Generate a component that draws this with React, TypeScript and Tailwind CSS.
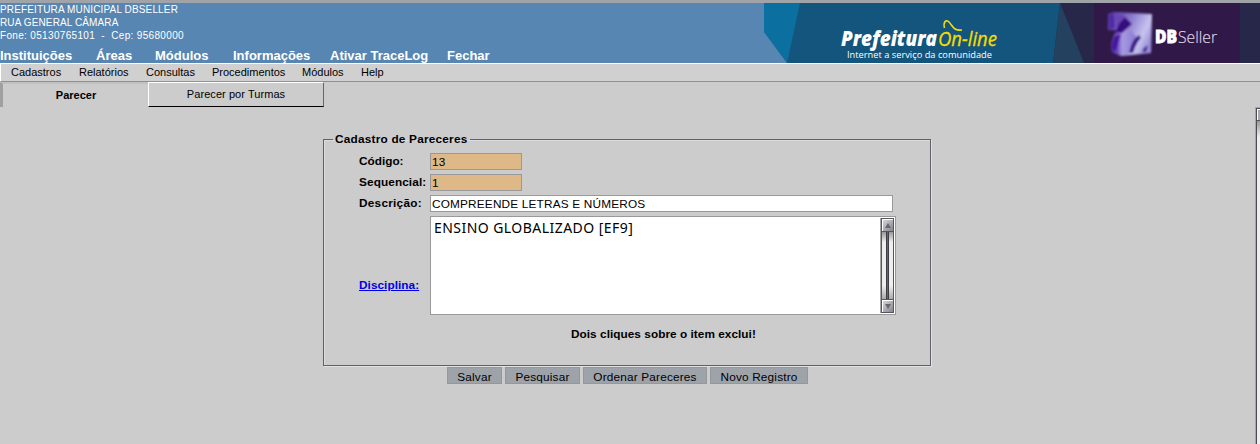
import React from "react";

const mainMenu = [
  { label: "Instituições", cell: "w-24" },
  { label: "Áreas", cell: "w-[59px]" },
  { label: "Módulos", cell: "w-[78px]" },
  { label: "Informações", cell: "w-[97px]" },
  { label: "Ativar TraceLog", cell: "w-[117px]" },
  { label: "Fechar", cell: "w-20" },
];

const subMenu = [
  { label: "Cadastros", cell: "w-[68px]" },
  { label: "Relatórios", cell: "w-[67px]" },
  { label: "Consultas", cell: "w-[66px]" },
  { label: "Procedimentos", cell: "w-[90px]" },
  { label: "Módulos", cell: "w-[59px]" },
  { label: "Help", cell: "w-10" },
];

const buttons = [
  { label: "Salvar", cell: "w-[55px]" },
  { label: "Pesquisar", cell: "w-[75px]" },
  { label: "Ordenar Pareceres", cell: "w-[124px]" },
  { label: "Novo Registro", cell: "w-[98px]" },
];

function Banner() {
  return (
    <svg width="496" height="60" viewBox="764 3 496 60" className="shrink-0">
      <defs>
        <linearGradient id="cube" x1="0" y1="0.1" x2="1" y2="0.6">
          <stop offset="0" stopColor="#5b3aae" />
          <stop offset="0.4" stopColor="#8674cb" />
          <stop offset="0.8" stopColor="#c6c4ee" />
          <stop offset="1" stopColor="#9a90d8" />
        </linearGradient>
        <linearGradient id="cubeBase" x1="0" y1="0" x2="1" y2="0">
          <stop offset="0" stopColor="#4a1fa0" />
          <stop offset="0.25" stopColor="#6b4cc0" />
          <stop offset="0.45" stopColor="#a79be0" />
          <stop offset="1" stopColor="#8a7ad2" />
        </linearGradient>
        <filter id="soft" x="-10%" y="-10%" width="120%" height="120%">
          <feGaussianBlur stdDeviation="0.8" />
        </filter>
      </defs>
      <rect x="764" y="3" width="496" height="60" fill="#14557d" />
      <path d="M764 3H800L787 63L764 32Z" fill="#0b6f9f" />
      <path d="M764 32L787 63H764Z" fill="#5786b2" />
      <path d="M1060 3H1260V63H1053Z" fill="#272849" />
      <path d="M1060 3L1084 63H1053Z" fill="#24425f" />
      <rect x="1094" y="3" width="146" height="60" fill="#301848" />
      <g filter="url(#soft)">
        <path d="M1108 14L1114 12L1152 14L1151 53L1122 56L1112 52L1111 44L1114 35L1117 30L1108 30Z" fill="url(#cube)" />
        <path d="M1116 32L1128 28L1136 36L1128 54L1121 56L1112 52L1111 44Z" fill="url(#cubeBase)" />
        <path d="M1109 15L1114 14L1115 28L1109 30Z" fill="#4f2ba3" />
        <path d="M1116 14L1125 15L1121 23L1116 28Z" fill="#6a45b4" />
        <path d="M1125 17L1132 24L1122 33L1115 32L1119 24Z" fill="#35087e" />
        <path d="M1114 37L1121 34L1116 51L1112 49Z" fill="#4a12a0" />
        <path d="M1129 53Q1132 39 1139 35L1141 38Q1136 43 1133 53Z" fill="#38138a" />
        <path d="M1142 52Q1144 45 1148 46L1146 52Z" fill="#4c2b9c" />
      </g>
      <text x="841" y="46" fontFamily="'Open Sans', sans-serif" fontSize="20.5" fontWeight="800" fontStyle="italic" fill="#fff" textLength="96" lengthAdjust="spacingAndGlyphs">Prefeitura</text>
      <text x="938" y="46" fontFamily="'Open Sans', sans-serif" fontSize="20.5" fontStyle="italic" fill="#f5dc00" stroke="#f5dc00" strokeWidth="0.3" textLength="59" lengthAdjust="spacingAndGlyphs">On-line</text>
      <path d="M944.5 28C943 22 946 19 949 22C953 26 953 31 962 30" fill="none" stroke="#f5dc00" strokeWidth="1.6" />
      <text x="847" y="57.5" fontFamily="'Open Sans', sans-serif" fontSize="9.8" fill="#fff" textLength="145" lengthAdjust="spacingAndGlyphs">Internet a serviço da comunidade</text>
      <text x="1155" y="42.5" fontFamily="'Open Sans', sans-serif" fontSize="17" fontWeight="800" fill="#fff" stroke="#fff" strokeWidth="0.8" textLength="22" lengthAdjust="spacingAndGlyphs">DB</text>
      <text x="1178" y="42.5" fontFamily="'Open Sans', sans-serif" fontSize="17" fontWeight="300" fill="#e2dae8" stroke="#e2dae8" strokeWidth="0.15" textLength="39" lengthAdjust="spacingAndGlyphs">Seller</text>
    </svg>
  );
}

function ScrollButton({ down = false }: { down?: boolean }) {
  return (
    <div className="flex h-3 w-full shrink-0 items-center justify-center border-l border-t border-white bg-linear-to-br from-[#d5d5da] to-[#85858b]">
      <svg width="6" height="5" viewBox="0 0 6 5">
        <path d={down ? "M0 0H6L3 5Z" : "M0 5H6L3 0Z"} fill="#66686e" />
      </svg>
    </div>
  );
}

function ListScrollbar() {
  return (
    <div className="flex h-[95px] w-[13px] flex-col border border-[#55565f] bg-[#55565f] shadow-[-1px_0_0_#a5a5aa]">
      <ScrollButton />
      <div className="my-px flex flex-1 justify-center bg-linear-to-b from-[#999] via-[#eee] via-15% to-[#eee]">
        <div className="flex h-full w-full justify-center bg-linear-to-b from-transparent from-80% to-[#aaa]">
          <div className="h-full w-[3px] border-x border-[#3f4046] bg-[#62666c]" />
        </div>
      </div>
      <ScrollButton down />
    </div>
  );
}

export default function App() {
  return (
    <div className="flex h-[444px] w-[1260px] flex-col overflow-hidden bg-[#ccc] font-['Liberation_Sans',sans-serif] text-black">
      <header className="flex h-[63px] shrink-0 border-t-[3px] border-[#a0a4a9] bg-[#5786b2] text-white">
        <div className="flex flex-1 flex-col whitespace-nowrap">
          <div className="h-[43px] shrink-0 text-[10px] leading-[13px]">
            <p className="tracking-[0.14px]">PREFEITURA MUNICIPAL DBSELLER</p>
            <p className="tracking-[0.12px]">RUA GENERAL CÂMARA</p>
            <p className="whitespace-pre tracking-[0.33px]">Fone: 05130765101  -  Cep: 95680000</p>
          </div>
          <nav className="flex shrink-0 text-[13px] leading-[19px] font-bold">
            {mainMenu.map((m) => (
              <a key={m.label} className={m.cell}>{m.label}</a>
            ))}
          </nav>
        </div>
        <Banner />
      </header>

      <nav className="flex h-[19px] shrink-0 border-t border-b border-l border-t-white border-b-[#8f9090] border-l-white bg-[#d0d0d0] pl-2.5 text-[11px] leading-4 whitespace-nowrap">
        {subMenu.map((m) => (
          <a key={m.label} className={m.cell}>{m.label}</a>
        ))}
      </nav>

      <div className="flex h-[25px] shrink-0 text-[11px] whitespace-nowrap">
        <div className="w-[148px] border-t-2 border-l-[3px] border-t-[#c0c0c0] border-l-[#a0a0a0] pl-px text-center leading-[23px] font-bold">Parecer</div>
        <div className="w-44 border border-t-white border-r-[#666] border-b-black border-l-white text-center leading-[23px] tracking-[0.06px]">Parecer por Turmas</div>
      </div>

      <main className="flex min-h-0 flex-1">
        <div className="flex flex-1 flex-col pt-[25px] pl-[323px] text-[12px]">
          <fieldset className="flex h-[234px] w-[608px] shrink-0 flex-col border border-[#606168] pl-[35px] font-bold shadow-[inset_1px_1px_0_#dcdce0,1px_1px_0_#e2e2e5]">
            <legend className="-ml-[26px] px-0.5 text-[11.8px] leading-[14px] tracking-[0.22px]">Cadastro de Pareceres</legend>
            <div className="mt-[5px] flex h-[21px] shrink-0 items-center text-[11.8px]">
              <label className="w-[71px] pt-px">Código:</label>
              <div className="h-[17px] w-[92px] border border-[#999] bg-[#deb887] pl-px leading-[17px] font-normal tracking-[0.2px]">13</div>
            </div>
            <div className="flex h-[21px] shrink-0 items-center text-[11.8px]">
              <label className="w-[71px] pt-px tracking-[0.1px]">Sequencial:</label>
              <div className="h-[17px] w-[92px] border border-[#999] bg-[#deb887] pl-px leading-[17px] font-normal">1</div>
            </div>
            <div className="flex h-[21px] shrink-0 items-center text-[11.8px]">
              <label className="w-[71px] pt-px tracking-[0.25px]">Descrição:</label>
              <div className="h-[17px] w-[463px] border border-[#999] bg-white pl-px leading-[17px] font-normal tracking-[0.18px]">COMPREENDE LETRAS E NÚMEROS</div>
            </div>
            <div className="mt-0.5 flex h-[99px] shrink-0">
              <a className="w-[71px] pt-[61px] text-[11.8px] leading-4 tracking-[0.05px] text-[#0000e8] underline">Disciplina:</a>
              <div className="flex w-[466px] justify-between border border-[#999] bg-white p-px pl-[3px]">
                <span className="font-['Noto_Sans',sans-serif] text-[14px] leading-[19px] font-normal tracking-[0.45px]">ENSINO GLOBALIZADO [EF9]</span>
                <ListScrollbar />
              </div>
            </div>
            <p className="mt-[11px] pl-[212px] text-[11.8px] leading-4 tracking-[0.04px]">Dois cliques sobre o item exclui!</p>
          </fieldset>
          <div className="mt-px flex gap-[3px] pl-[124px] text-[11.8px] tracking-[0.18px]">
            {buttons.map((b) => (
              <button key={b.label} className={`${b.cell} h-[17px] border border-[#95979a] bg-[#9ea3aa] text-center leading-[18px] whitespace-nowrap`}>{b.label}</button>
            ))}
          </div>
        </div>
        <div className="flex w-[5px] flex-col border-t border-l border-[#a5a5aa]">
          <div className="flex flex-1 flex-col border-t border-l border-[#4c4d54]">
            <div className="h-[11px] border-t border-l border-white bg-[#a9a9b0]" />
            <div className="flex-1 border-t border-[#55565f] bg-linear-to-b from-[#999] to-[#eee] to-5%" />
          </div>
        </div>
      </main>
    </div>
  );
}
